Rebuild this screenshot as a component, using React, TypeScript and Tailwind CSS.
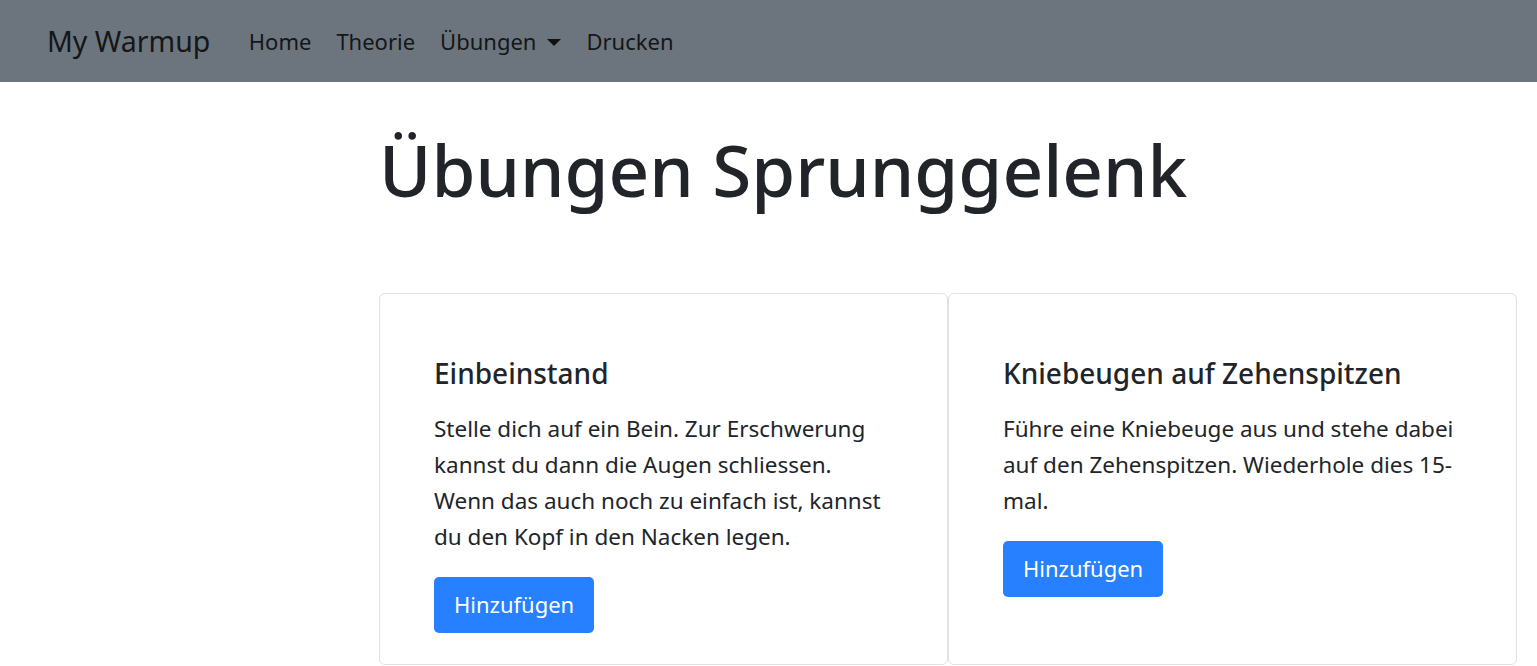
import React from 'react';

interface Exercise {
  title: string;
  lines: string[];
}

// Each entry is a paragraph; the first one breaks after its second sentence
const exercises: Exercise[] = [
  {
    title: 'Einbeinstand',
    lines: [
      'Stelle dich auf ein Bein. Zur Erschwerung kannst du dann die Augen schliessen.',
      'Wenn das auch noch zu einfach ist, kannst du den Kopf in den Nacken legen.',
    ],
  },
  {
    title: 'Kniebeugen auf Zehenspitzen',
    lines: ['Führe eine Kniebeuge aus und stehe dabei auf den Zehenspitzen. Wiederhole dies 15-mal.'],
  },
];

function Navbar() {
  return (
    <nav className="flex h-[82px] items-center bg-[#6c757d] pl-[47px] pt-[1px] text-[#141618]">
      <a className="mr-[26px] text-[28.5px] font-normal" href="#">
        My Warmup
      </a>
      <ul className="flex items-center text-[22px]">
        <li className="px-[12.5px]">Home</li>
        <li className="px-[12.5px]">Theorie</li>
        <li className="flex items-center px-[12.5px]">
          Übungen
          {/* caret */}
          <span className="ml-[11px] mt-[1px] inline-block h-0 w-0 border-x-[7px] border-t-[7px] border-x-transparent border-t-[#111]" />
        </li>
        <li className="px-[12.5px]">Drucken</li>
      </ul>
    </nav>
  );
}

function ExerciseCard({exercise}: {exercise: Exercise}) {
  return (
    <div className="rounded-[6px] border border-[#dee2e6] bg-white px-[54px] pb-[31px] pt-[63px]">
      <h4 className="mb-[20px] text-[28px] font-medium leading-[1.2] text-[#212529]">
        {exercise.title}
      </h4>
      <p className="mb-[22px] text-[22.5px] leading-[36px] text-[#212529]">
        {exercise.lines.map((line, i) => (
          <React.Fragment key={i}>
            {i > 0 && <br />}
            {line}
          </React.Fragment>
        ))}
      </p>
      <button
        type="button"
        className="h-[56px] rounded-[5px] bg-[#2680ff] px-[20px] text-[22px] text-white"
      >
        Hinzufügen
      </button>
    </div>
  );
}

export default function App() {
  return (
    <div className="min-h-[666px] bg-white font-['Segoe_UI','Noto_Sans',sans-serif]">
      <Navbar />
      <main className="pl-[379px] pr-[20px]">
        <h1 className="pb-[81px] pt-[45px] text-[71px] font-medium leading-[1.2] text-[#212529]">
          Übungen Sprunggelenk
        </h1>
        <div className="grid grid-cols-2">
          {exercises.map((exercise) => (
            <ExerciseCard key={exercise.title} exercise={exercise} />
          ))}
        </div>
      </main>
    </div>
  );
}
